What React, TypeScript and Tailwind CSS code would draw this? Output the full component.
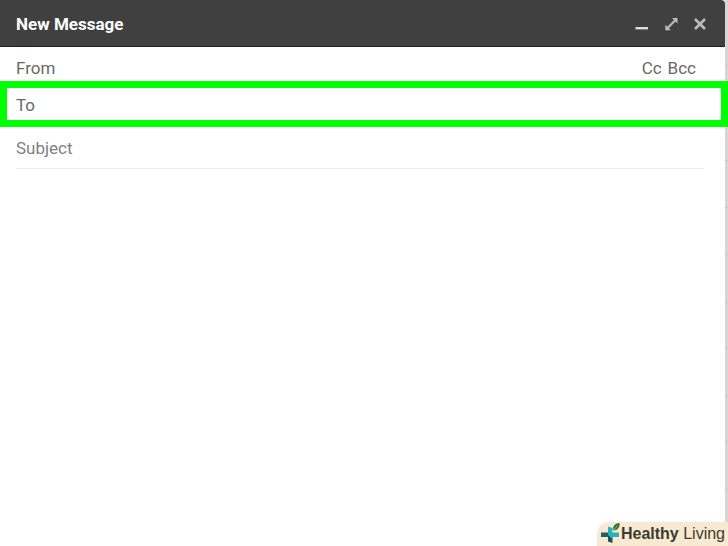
import type { ReactNode } from "react";

type HeaderButtonProps = {
  label: string;
  children: ReactNode;
};

function HeaderButton({ label, children }: HeaderButtonProps) {
  return (
    <button type="button" aria-label={label} className="flex size-4 items-center justify-center text-[#bdbdbd]">
      {children}
    </button>
  );
}

function ComposeHeader() {
  return (
    <header className="flex h-[47px] items-center justify-between rounded-tr-sm border-b border-[#222222] bg-[#404040] pt-[2px] pr-[17px] pl-4">
      <h1 className="text-[17px] leading-6 font-bold text-white">New Message</h1>

      <div className="flex items-center gap-[13px]">
        <HeaderButton label="Minimize">
          <svg viewBox="0 0 16 16" className="size-4" fill="currentColor">
            <rect x="1.5" y="11" width="12.5" height="2.4" fill="#dedede" />
          </svg>
        </HeaderButton>
        <HeaderButton label="Full screen">
          <svg viewBox="0 0 16 16" className="size-4" fill="currentColor">
            <path d="M9 2h5.500v5.500l-2-2-6.700 6.700 2 2H2.300V8.700l2 2L11 4z" />
          </svg>
        </HeaderButton>
        <HeaderButton label="Close">
          <svg viewBox="0 0 16 16" className="size-4" fill="none" stroke="currentColor" strokeWidth="2.5">
            <path d="M3 3l10 10M13 3l-10 10" />
          </svg>
        </HeaderButton>
      </div>
    </header>
  );
}

function Watermark() {
  return (
    <div className="absolute right-0 bottom-0 flex h-6 items-center rounded-tl-xl bg-[#f7ead0] pr-[3px] pl-[3px] font-['Liberation_Sans',sans-serif] text-base leading-6 text-[#3d3a33]">
      <svg viewBox="0 0 21 24" className="h-6 w-[21px]" aria-hidden="true">
        <path d="M8 4.500l4.500 1.500V12H8z" fill="#2bb3bd" />
        <path d="M1 10.500h7.500l2 2.200-2 2.300H1z" fill="#23606c" />
        <path d="M8 13h4.500v8L8 19.500z" fill="#23505c" />
        <path d="M8 10.500h11V15H12.500v2L8 13z" fill="#2bb3bd" />
        <path d="M13.500 8.500C12 4.500 15 1.500 19.500 1 20 5 18 8 13.500 8.500z" fill="#2f6b2c" />
        <path d="M13.500 8.500l4-5" stroke="#f7ead0" strokeWidth=".6" />
      </svg>
      <span>
        <strong className="font-bold">Healthy</strong> Living
      </span>
    </div>
  );
}

export default function App() {
  return (
    <main className="relative flex min-h-screen w-full bg-white font-[Roboto,sans-serif] text-[17px] leading-6 text-[#686868]">
      <form className="flex min-w-0 flex-1 flex-col">
        <ComposeHeader />

        {/* From */}
        <div className="flex h-[34px] items-center gap-3 pt-2 pr-[29px] pl-4">
          <label htmlFor="from">From</label>
          <input id="from" type="text" className="min-w-0 flex-1 outline-none" />
          <div className="flex gap-[6px]">
            <button type="button">Cc</button>
            <button type="button">Bcc</button>
          </div>
        </div>

        {/* To */}
        <div className="relative -mr-[3px] flex h-[46px] items-center gap-3 border-[7px] border-[#00ff00] bg-white px-[9px] pt-[2px]">
          <label htmlFor="to">To</label>
          <input id="to" type="text" className="min-w-0 flex-1 outline-none" />
        </div>

        {/* Subject */}
        <div className="mr-[21px] ml-4 flex h-[42px] items-center border-b border-[#ececec]">
          <input
            type="text"
            aria-label="Subject"
            placeholder="Subject"
            className="w-full outline-none placeholder:text-[#808080]"
          />
        </div>

        <textarea aria-label="Message body" className="w-full flex-1 resize-none px-4 py-3 outline-none" />
      </form>

      {/* Edge of the mail list behind the window */}
      <div className="w-[3px] bg-[#d6d6d6] pt-5">
        {[1, 2, 3, 4, 5, 6, 7, 8, 9, 10, 11].map((row) => (
          <div key={row} className="h-[47px] border-b border-[#c8c8c8]" />
        ))}
      </div>

      <Watermark />
    </main>
  );
}
